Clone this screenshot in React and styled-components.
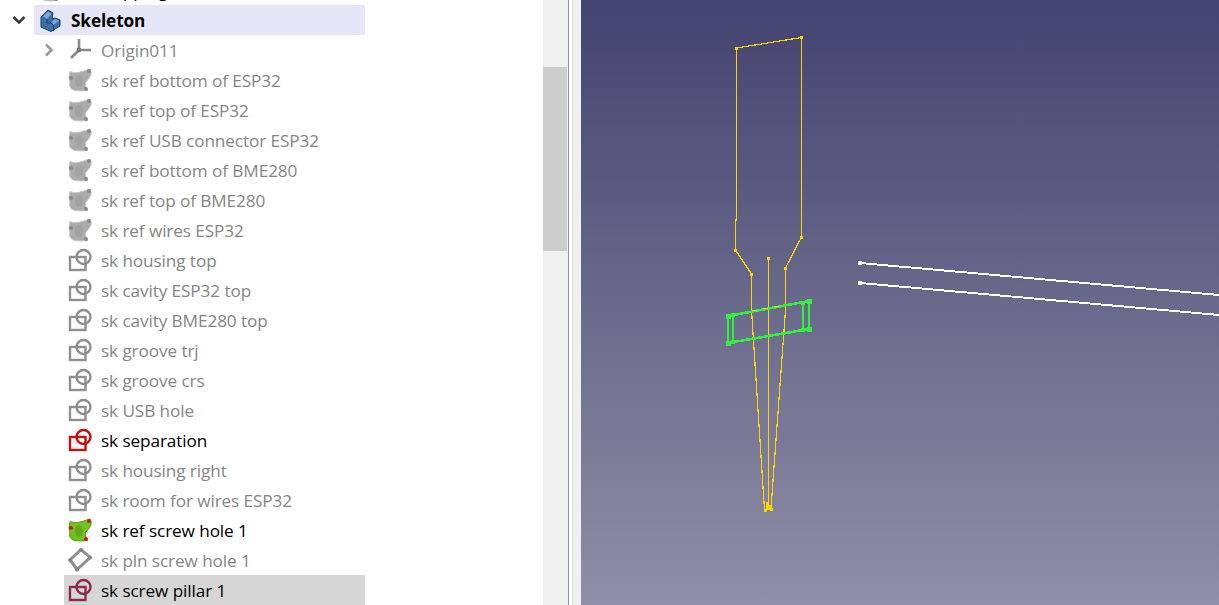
import styled, { createGlobalStyle } from 'styled-components'

const GlobalStyle = createGlobalStyle`
  html, body {
    margin: 0;
    height: 100%;
    overflow: hidden;
    background: #fff;
  }
  #root {
    height: 100%;
  }
`

const Page = styled.div`
  display: flex;
  width: 1219px;
  height: 605px;
  overflow: hidden;
  font-family: 'Open Sans', 'Liberation Sans', sans-serif;
`

const TreePanel = styled.div`
  width: 543px;
  height: 100%;
  overflow: hidden;
  background: #fff;
`

// the list is scrolled, the row above Skeleton only shows its descenders
const TreeList = styled.ul`
  list-style: none;
  margin: -25px 0 0;
  padding: 0;
`

const Row = styled.li`
  display: flex;
  align-items: center;
  height: 30px;
  width: 365px;
  padding-left: ${(props) => props.$indent}px;
  box-sizing: border-box;
`

const Arrow = styled.svg`
  flex: none;
  width: 14px;
  height: 14px;
  margin-right: 8px;
`

const RowBody = styled.div`
  flex: 1;
  display: flex;
  align-items: center;
  height: 100%;
  padding-left: 4px;
  background: ${(props) => props.$bg || 'transparent'};
`

const IconBox = styled.svg`
  flex: none;
  width: 24px;
  height: 24px;
  margin-right: 9px;
`

const Label = styled.span`
  font-size: 17.2px;
  letter-spacing: -0.1px;
  white-space: nowrap;
  color: ${(props) => (props.$dim ? '#868686' : '#000')};
  font-weight: ${(props) => (props.$bold ? 700 : 400)};
`

const Scrollbar = styled.div`
  flex: none;
  width: 25px;
  height: 100%;
  padding-top: 67px;
  box-sizing: border-box;
  background: #f0f0f0;
`

const ScrollThumb = styled.div`
  width: 24px;
  height: 184px;
  background: #cdcdcd;
`

const Splitter = styled.div`
  flex: none;
  width: 13px;
  height: 100%;
  box-sizing: border-box;
  background: #f0f0f0;
  border-left: 1px solid #8c95a3;
`

const SplitterGap = styled.div`
  width: 3px;
  height: 100%;
  background: #fff;
  border-right: 1px solid #dcdcdc;
`

const Viewport = styled.div`
  flex: 1;
  height: 100%;
  background: linear-gradient(180deg, #434370 0%, #8f8fa7 100%);
`

const Canvas = styled.svg`
  display: block;
  width: 638px;
  height: 605px;
`

const ChevronDown = () => (
  <Arrow viewBox="0 0 14 14">
    <path d="M1.5 4 L7 9.5 L12.5 4" fill="none" stroke="#3a3a3a" strokeWidth="2.6" />
  </Arrow>
)

const ChevronRight = () => (
  <Arrow viewBox="0 0 14 14">
    <path d="M4 1.5 L9.5 7 L4 12.5" fill="none" stroke="#9a9a9a" strokeWidth="2.6" />
  </Arrow>
)

const BodyIcon = () => (
  <IconBox viewBox="0 0 24 24">
    <path d="M3 9 L10 2 L15 5 L14 11 L17 10 L22 12 L22 18 L13 23.5 L3 19 Z" fill="#3a6fa8" stroke="#1d3c5e" strokeWidth="1" />
    <path d="M5 8.5 L10 3.5 L13.5 6 L9 11 Z" fill="#7ba8d8" />
    <path d="M13 15 L17 11 L21 12.8 L15.5 17 Z" fill="#7ba8d8" />
    <path d="M9 11 L9 15 L13 15 L15.5 17 L15.5 23" fill="none" stroke="#1d3c5e" strokeWidth="1" />
  </IconBox>
)

const OriginIcon = () => (
  <IconBox viewBox="0 0 24 24">
    <path d="M11 12 L11 1 M11 12 L23 12 M11 12 L3 20" fill="none" stroke="#8a8a8a" strokeWidth="2.6" />
    <circle cx="11" cy="12" r="2.4" fill="#7a7a7a" />
  </IconBox>
)

const RefSketchIcon = ({ fill = '#ababab', dot = '#8a8a8a', edge = '#c8c8c8', core = '#a2a2a2' }) => (
  <IconBox viewBox="0 0 24 24">
    <path d="M2 3.5 Q6 5.5 10 4.5 Q16 3 22 1 Q24 4 23 7 Q21 11 17.5 14.5 Q17 18 19.5 22.5 Q13 23.5 6.5 22.5 Q2.5 21 1.5 18 Q2.5 14 1 10 Z" fill={fill} stroke={edge} strokeWidth="1" />
    <ellipse cx="11" cy="13" rx="4" ry="6" fill={core} />
    <circle cx="3" cy="10" r="2" fill={dot} />
    <circle cx="21" cy="3" r="2" fill={dot} />
    <circle cx="18" cy="21" r="2" fill={dot} />
  </IconBox>
)

const SketchIcon = ({ color = '#8f8f8f' }) => (
  <IconBox viewBox="0 0 24 24">
    <rect x="2" y="9" width="15.5" height="13" fill="none" stroke={color} strokeWidth="2.4" />
    <circle cx="15.5" cy="9" r="7" fill="none" stroke={color} strokeWidth="2.4" />
  </IconBox>
)

const PlaneIcon = () => (
  <IconBox viewBox="0 0 24 24">
    <path d="M13 1.5 L22 9.5 L9 21.5 L2 12 Z" fill="none" stroke="#8f8f8f" strokeWidth="3" />
    <circle cx="13" cy="2" r="2" fill="#858585" />
    <circle cx="22" cy="9.5" r="2" fill="#858585" />
    <circle cx="9" cy="21.5" r="2" fill="#858585" />
    <circle cx="2.2" cy="12" r="2" fill="#858585" />
  </IconBox>
)

const rows = [
  { name: 'sk ref bottom of ESP32', icon: 'ref', dim: true },
  { name: 'sk ref top of ESP32', icon: 'ref', dim: true },
  { name: 'sk ref USB connector ESP32', icon: 'ref', dim: true },
  { name: 'sk ref bottom of BME280', icon: 'ref', dim: true },
  { name: 'sk ref top of BME280', icon: 'ref', dim: true },
  { name: 'sk ref wires ESP32', icon: 'ref', dim: true },
  { name: 'sk housing top', icon: 'sketch', dim: true },
  { name: 'sk cavity ESP32 top', icon: 'sketch', dim: true },
  { name: 'sk cavity BME280 top', icon: 'sketch', dim: true },
  { name: 'sk groove trj', icon: 'sketch', dim: true },
  { name: 'sk groove crs', icon: 'sketch', dim: true },
  { name: 'sk USB hole', icon: 'sketch', dim: true },
  { name: 'sk separation', icon: 'sketch', color: '#c40f0f' },
  { name: 'sk housing right', icon: 'sketch', dim: true },
  { name: 'sk room for wires ESP32', icon: 'sketch', dim: true },
  { name: 'sk ref screw hole 1', icon: 'green' },
  { name: 'sk pln screw hole 1', icon: 'plane', dim: true },
  { name: 'sk screw pillar 1', icon: 'sketch', color: '#8a2a4c', bg: '#d6d6d6' },
]

const renderIcon = (row) => {
  if (row.icon === 'ref') return <RefSketchIcon />
  if (row.icon === 'green') return <RefSketchIcon fill="#74c020" dot="#d01818" edge="#5f9a18" core="#62ab18" />
  if (row.icon === 'plane') return <PlaneIcon />
  return <SketchIcon color={row.color} />
}

const yellowPoints = [
  [736, 48],
  [801, 37],
  [735, 250],
  [751, 274],
  [785, 268],
  [801, 237],
  [768, 258],
]

const greenCorners = [
  [728, 316, 5],
  [728, 343, 5],
  [809, 301, 5],
  [809, 329, 5],
  [733, 315, 4],
  [733, 342, 4],
  [803, 303, 4],
  [803, 330, 4],
]

function App() {
  return (
    <Page>
      <GlobalStyle />
      <TreePanel>
        <TreeList>
          <Row $indent={34}>
            <RowBody>
              <RefSketchIcon />
              <Label>Overlapping</Label>
            </RowBody>
          </Row>
          <Row $indent={12}>
            <ChevronDown />
            <RowBody $bg="#e6e6fa">
              <BodyIcon />
              <Label $bold>Skeleton</Label>
            </RowBody>
          </Row>
          <Row $indent={42}>
            <ChevronRight />
            <RowBody>
              <OriginIcon />
              <Label $dim>Origin011</Label>
            </RowBody>
          </Row>
          {rows.map((row) => (
            <Row key={row.name} $indent={64}>
              <RowBody $bg={row.bg}>
                {renderIcon(row)}
                <Label $dim={row.dim}>{row.name}</Label>
              </RowBody>
            </Row>
          ))}
        </TreeList>
      </TreePanel>
      <Scrollbar>
        <ScrollThumb />
      </Scrollbar>
      <Splitter>
        <SplitterGap />
      </Splitter>
      <Viewport>
        <Canvas viewBox="581 0 638 605" shapeRendering="crispEdges">
          <g fill="none" stroke="#ffd400" strokeWidth="1.2">
            <path d="M736.5 48 L801.5 37.5 L801.5 237 L785.5 268 L785.5 310 L771 508" />
            <path d="M736.5 48 L736.5 220 L735.5 220 L735.5 250 L751.5 274 L751.5 310 L764.5 510 L771 509" />
            <path d="M768.5 258 L768.5 510" />
            <path d="M767 502 L767 510 M770 505 L770 510" />
          </g>
          <g fill="#ffd400">
            {yellowPoints.map(([x, y]) => (
              <rect key={`${x}-${y}`} x={x - 1} y={y - 1} width="3" height="3" />
            ))}
            <rect x="764" y="509" width="3" height="3" />
            <rect x="770" y="508" width="3" height="3" />
          </g>
          <g fill="none" stroke="#33f03c" strokeWidth="2.6">
            <path d="M728 316 L809 301 M728 343 L809 329" />
            <path d="M728 316 L728 343 M733 315 L733 342 M803 303 L803 330 M809 301 L809 329" />
          </g>
          <path d="M752 311 L785 305" fill="none" stroke="#ffd400" strokeWidth="1" strokeDasharray="5 6" />
          <g fill="#33f03c">
            {greenCorners.map(([x, y, size]) => (
              <rect key={`${x}-${y}`} x={x - size / 2} y={y - size / 2} width={size} height={size} />
            ))}
          </g>
          <g fill="none" stroke="#fff" strokeWidth="2">
            <path d="M860 263 L1219 295" />
            <path d="M860 283 L1219 315" />
          </g>
          <g fill="#fff">
            <rect x="858" y="261" width="4" height="4" />
            <rect x="858" y="281" width="4" height="4" />
          </g>
        </Canvas>
      </Viewport>
    </Page>
  )
}

export default App
